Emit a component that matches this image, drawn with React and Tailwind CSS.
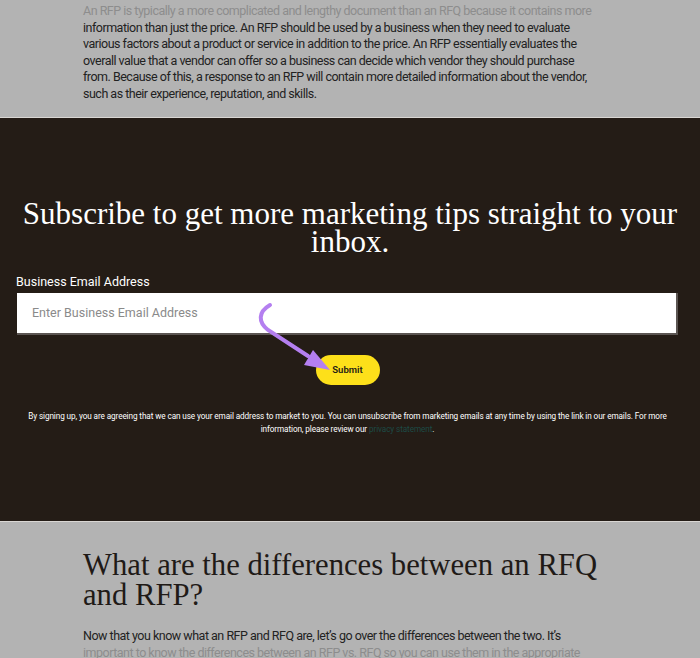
import React from 'react'

const sans = { fontFamily: 'Roboto, "Liberation Sans", sans-serif' }
const serif = { fontFamily: '"Liberation Serif", serif' }

function Arrow() {
  return (
    <svg className="absolute left-0 top-0 pointer-events-none" width="700" height="658" viewBox="0 0 700 658">
      <path
        d="M270 305 C 258 312, 258 322, 268 330 L 308 356"
        fill="none"
        stroke="#b47ff0"
        strokeWidth="4"
        strokeLinecap="round"
      />
      <polygon points="313,350 304,365 330,370" fill="#b47ff0" />
    </svg>
  )
}

function Lines({ lines }) {
  return lines.map((l, i) => (
    <span key={i} className={'block whitespace-nowrap ' + (l.faded ? 'text-[#8d8d8d]' : '')}>
      {l.text}
    </span>
  ))
}

const topLines = [
  { text: 'An RFP is typically a more complicated and lengthy document than an RFQ because it contains more', faded: true },
  { text: 'information than just the price. An RFP should be used by a business when they need to evaluate' },
  { text: 'various factors about a product or service in addition to the price. An RFP essentially evaluates the' },
  { text: 'overall value that a vendor can offer so a business can decide which vendor they should purchase' },
  { text: 'from. Because of this, a response to an RFP will contain more detailed information about the vendor,' },
  { text: 'such as their experience, reputation, and skills.' },
]

const bottomLines = [
  { text: 'Now that you know what an RFP and RFQ are, let’s go over the differences between the two. It’s' },
  { text: 'important to know the differences between an RFP vs. RFQ so you can use them in the appropriate', faded: true },
]

export default function App() {
  return (
    <div className="relative w-[700px] h-[658px] overflow-hidden bg-[#b3b3b3]" style={sans}>
      <div className="h-[117px] pl-[83px] pt-[3px]">
        <p className="text-[12.5px] leading-[16.5px] tracking-[-0.5px] text-[#222]">
          <Lines lines={topLines} />
        </p>
      </div>

      <div className="h-[405px] bg-[#241c16] border-y border-[#d9d6d3] pt-[82px]">
        <h2 className="text-center text-white text-[31px] leading-[28px] px-2" style={serif}>
          Subscribe to get more marketing tips straight to your inbox.
        </h2>
        <div className="pl-[17px] pr-[22px] pt-[18px]">
          <label className="block text-white text-[12.5px] leading-[16px] mb-[3px] -ml-px">Business Email Address</label>
          <div className="h-[42px] bg-white border-b-2 border-r-2 border-[#5b5552] flex items-center pl-[15px]">
            <span className="text-[12.5px] text-[#8a8a8a]">Enter Business Email Address</span>
          </div>
          <div className="flex justify-center pt-[20px]">
            <button className="w-[64px] h-[30px] rounded-full bg-[#fde01a] text-[#241c16] text-[9.5px] font-semibold">
              Submit
            </button>
          </div>
          <p className="text-center text-white text-[8.2px] leading-[13px] tracking-[-0.1px] pt-[25px] whitespace-nowrap">
            By signing up, you are agreeing that we can use your email address to market to you. You can unsubscribe from marketing emails at any time by using the link in our emails. For more
            <br />
            information, please review our <span className="text-[#1d4a45]">privacy statement</span>.
          </p>
        </div>
      </div>

      <div className="pl-[83px] pt-[28px]">
        <h2 className="text-[#1f1a17] text-[30.7px] leading-[30px] w-[540px]" style={serif}>
          What are the differences between an RFQ and RFP?
        </h2>
        <p className="text-[12.5px] leading-[16.5px] tracking-[-0.5px] text-[#222] mt-[18px]">
          <Lines lines={bottomLines} />
        </p>
      </div>

      <Arrow />
    </div>
  )
}
